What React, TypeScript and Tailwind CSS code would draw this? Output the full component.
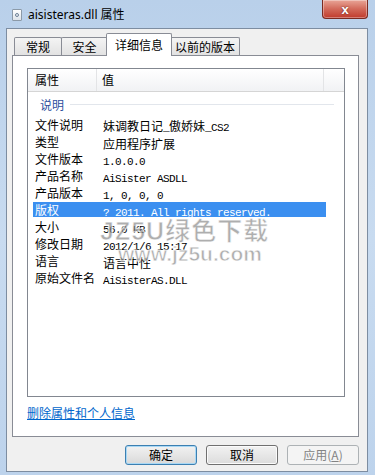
import React from 'react';

const CJK = "font-['Noto_Sans_CJK_SC',sans-serif]";

type Row = { label: string; value: string; selected?: boolean };

const rows: Row[] = [
    { label: '文件说明', value: '妹调教日记_傲娇妹_CS2' },
    { label: '类型', value: '应用程序扩展' },
    { label: '文件版本', value: '1.0.0.0' },
    { label: '产品名称', value: 'AiSister ASDLL' },
    { label: '产品版本', value: '1, 0, 0, 0' },
    { label: '版权', value: '? 2011. All rights reserved.', selected: true },
    { label: '大小', value: '56.0 KB' },
    { label: '修改日期', value: '2012/1/6 15:17' },
    { label: '语言', value: '语言中性' },
    { label: '原始文件名', value: 'AiSisterAS.DLL' },
];

// split a value into CJK runs and ascii runs (ascii drawn in a narrow mono face)
const Value = ({ text }: { text: string }) => {
    const parts = text.split(/([\u4e00-\u9fff]+)/).filter(Boolean);
    return (
        <span className="whitespace-pre">
            {parts.map((p, i) =>
                /[\u4e00-\u9fff]/.test(p) ? (
                    <span key={i} className={`${CJK} text-[12px]`}>{p}</span>
                ) : (
                    <span key={i} className="font-['Liberation_Mono',monospace] text-[11px] tracking-[-0.6px]">{p}</span>
                )
            )}
        </span>
    );
};

const Tab = ({ label, width, active }: { label: string; width: number; active?: boolean }) => {
    if (active) {
        return (
            <div
                className="relative z-10 -mb-px -ml-[2px] -mr-[1px] flex h-[23px] items-start justify-center rounded-t-[2px] border border-b-0 border-[#898c95] bg-white pt-[2px] text-[12px] text-black"
                style={{ width }}
            >
                {label}
            </div>
        );
    }
    return (
        <div
            className="flex h-[18px] items-center justify-center rounded-t-[2px] border border-b-0 border-[#898c95] bg-gradient-to-b from-[#f4f4f4] to-[#e2e2e2] pt-[1px] text-[12px] text-black -ml-px first:ml-0"
            style={{ width }}
        >
            {label}
        </div>
    );
};

const App = () => {
    return (
        <div className={`relative flex h-[475px] w-[375px] flex-col overflow-hidden bg-gradient-to-b from-[#b9d0ea] via-[#c8dbf0] to-[#bdd3ec] ${CJK}`}>
            {/* title bar */}
            <div className="flex h-[28px] shrink-0 items-start">
                <div className="ml-[12px] mt-[9px] h-[12px] w-[10px] rounded-[1px] border border-[#8c9aa8] bg-gradient-to-b from-white to-[#dde3ea]">
                    <div className="mx-auto mt-[3px] h-[4px] w-[4px] rounded-full border border-[#6b7f95]" />
                </div>
                <div className="ml-[6px] mt-[6px] font-['Noto_Sans','Noto_Sans_CJK_SC',sans-serif] text-[12px] leading-[18px] text-black">
                    aisisteras.dll 属性
                </div>
                <div className="ml-auto mr-[7px] flex h-[19px] w-[46px] items-center justify-center rounded-b-[4px] border border-t-0 border-[#7a2b22] bg-gradient-to-b from-[#e8a597] via-[#d2695a] to-[#c0392b] shadow-[inset_0_0_0_1px_rgba(255,255,255,0.35)]">
                    <span className="font-['Liberation_Sans',sans-serif] text-[13px] font-bold leading-none text-white [text-shadow:0_0_2px_#5a1a12]">x</span>
                </div>
            </div>

            {/* client area */}
            <div className="mb-[3px] ml-[6px] mr-[7px] flex flex-1 flex-col border border-[#7d8da1] bg-[#f0f0f0] pl-[5px] pr-[8px]">
                {/* tabs */}
                <div className="mt-[4px] flex h-[22px] items-end pl-[2px]">
                    <Tab label="常规" width={48} />
                    <Tab label="安全" width={47} />
                    <Tab label="详细信息" width={66} active />
                    <Tab label="以前的版本" width={70} />
                </div>

                {/* tab panel */}
                <div className="flex h-[382px] flex-col border border-[#898c95] bg-white pl-[14px] pr-[13px] pt-[12px]">
                    {/* list view */}
                    <div className="relative flex h-[329px] flex-col border border-[#828790] bg-white">
                        <div className="flex h-[23px] shrink-0 items-center border-b border-[#d5d5d5] bg-gradient-to-b from-white to-[#f1f2f4] text-[12px] text-black">
                            <div className="flex h-full w-[69px] items-center border-r border-[#e3e4e6] pl-[7px]">属性</div>
                            <div className="flex h-full w-[227px] items-center border-r border-[#e3e4e6] pl-[5px]">值</div>
                            <div className="h-full flex-1" />
                        </div>

                        {/* group header */}
                        <div className="mt-[4px] flex h-[17px] items-center pl-[12px] pr-[10px]">
                            <span className="text-[12px] text-[#2c4f9e]">说明</span>
                            <div className="ml-[6px] h-px flex-1 bg-[#e2e6ec]" />
                        </div>

                        <div className="mt-[3px] flex flex-col">
                            {rows.map(r => (
                                <div key={r.label} className="flex h-[17px] items-center pl-[5px]">
                                    <div
                                        className={`flex h-[15px] w-[293px] items-center ${r.selected ? 'bg-[#3b8ff0] text-white' : 'text-black'}`}
                                    >
                                        <div className="w-[70px] pl-[2px] text-[12px] leading-none">{r.label}</div>
                                        <div className="leading-none">
                                            <Value text={r.value} />
                                        </div>
                                    </div>
                                </div>
                            ))}
                        </div>

                        {/* watermark */}
                        <div className="pointer-events-none absolute left-[72px] top-[150px] flex flex-col items-start">
                            <span className="font-['Liberation_Sans','Noto_Sans_CJK_SC',sans-serif] text-[25px] font-bold leading-[24px] tracking-[1px] text-[#8a8a8a]/70 [-webkit-text-stroke:1px_rgba(255,255,255,0.8)]">
                                JZ5U绿色下载
                            </span>
                            <span className="ml-[18px] font-['Liberation_Sans',sans-serif] text-[21px] font-bold leading-[22px] text-[#8a8a8a]/70 [-webkit-text-stroke:1px_rgba(255,255,255,0.8)]">
                                www.jz5u.com
                            </span>
                        </div>
                    </div>

                    <div className="mt-[8px] text-[12px] leading-[16px]">
                        <span className="text-[#0066cc] underline">删除属性和个人信息</span>
                    </div>
                </div>

                {/* buttons */}
                <div className="mt-[8px] flex justify-end gap-[9px] pr-0">
                    <button className="flex h-[20px] w-[72px] items-center justify-center rounded-[3px] border border-[#3c7fb1] bg-gradient-to-b from-[#f2f2f2] to-[#d9d9d9] text-[12px] text-black shadow-[inset_0_0_0_1px_#a8d8f5]">
                        确定
                    </button>
                    <button className="flex h-[20px] w-[72px] items-center justify-center rounded-[3px] border border-[#707070] bg-gradient-to-b from-[#f2f2f2] to-[#dcdcdc] text-[12px] text-black shadow-[inset_0_0_0_1px_#fbfbfb]">
                        取消
                    </button>
                    <button className="flex h-[20px] w-[72px] items-center justify-center rounded-[3px] border border-[#adb2b5] bg-[#f4f4f4] text-[12px] text-[#838383]">
                        应用(<span className="underline">A</span>)
                    </button>
                </div>
            </div>
        </div>
    );
};

export default App;
